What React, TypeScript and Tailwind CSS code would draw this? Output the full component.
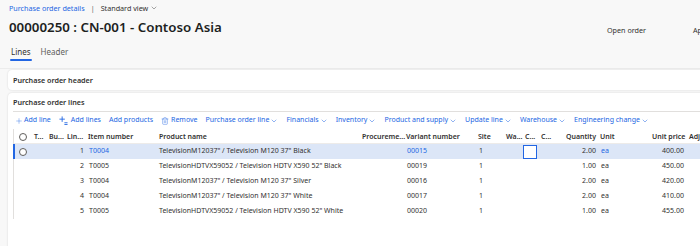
import { ChevronDown, Plus, Trash2 } from "lucide-react";

const blue = "text-[#2266e3]";

const toolbar = [
  { label: "Purchase order line" },
  { label: "Financials" },
  { label: "Inventory" },
  { label: "Product and supply" },
  { label: "Update line" },
  { label: "Warehouse" },
  { label: "Engineering change" },
];

const rows = [
  { line: 1, item: "T0004", name: 'TelevisionM12037" / Television M120 37" Black', variant: "00015", qty: "2.00", price: "400.00" },
  { line: 2, item: "T0005", name: 'TelevisionHDTVX59052 / Television HDTV X590 52" Black', variant: "00019", qty: "1.00", price: "450.00" },
  { line: 3, item: "T0004", name: 'TelevisionM12037" / Television M120 37" Silver', variant: "00016", qty: "2.00", price: "420.00" },
  { line: 4, item: "T0004", name: 'TelevisionM12037" / Television M120 37" White', variant: "00017", qty: "2.00", price: "410.00" },
  { line: 5, item: "T0005", name: 'TelevisionHDTVX59052 / Television HDTV X590 52" White', variant: "00020", qty: "1.00", price: "455.00" },
];

const cols =
  "grid grid-cols-[18px_15px_18px_21px_71px_203px_44px_72px_28px_19px_16px_17px_42px_54px_35px_60px]";

function AddLinesIcon() {
  return (
    <svg width="9" height="9" viewBox="0 0 10 10" fill="none" stroke="currentColor" strokeWidth="1">
      <path d="M3.5 0.5v6M0.5 3.5h6M6 7.5h3.5M6 9.5h3.5" />
    </svg>
  );
}

function Circle() {
  return <div className="w-[8px] h-[8px] rounded-full border border-[#605e5c] bg-white" />;
}

export default function App() {
  return (
    <div
      className="w-[700px] h-[246px] overflow-hidden bg-[#f8f8f8] text-[#323130]"
      style={{ fontFamily: '"Noto Sans", "Open Sans", sans-serif' }}
    >
      <div className="w-[780px]">
        {/* Top section */}
        <div className="border-b border-[#ececec] pb-[7px]">
          <div className="h-[17px] px-[9px] flex items-center gap-[6px] text-[7.2px]">
            <span className={blue}>Purchase order details</span>
            <span className="text-[#605e5c]">|</span>
            <span className="flex items-center gap-[2px]">
              Standard view
              <ChevronDown className="w-[8px] h-[8px]" strokeWidth={1.3} />
            </span>
          </div>
          <div className="mt-[2px] h-[18px] pl-[9px] flex items-center">
            <h1 className="w-[598px] text-[13.3px] font-semibold leading-none text-[#201f1e]">
              00000250 : CN-001 - Contoso Asia
            </h1>
            <div className="flex items-center pt-[5px] text-[7.2px] whitespace-nowrap">
              <span className="w-[86px]">Open order</span>
              <span>Approved</span>
            </div>
          </div>
          <div className="mt-[9px] px-[9px] flex gap-[8px] text-[8px]">
            <div className="flex flex-col items-center">
              <span className="h-[12px] leading-[12px] px-[2px]">Lines</span>
              <div className="mt-[1px] h-[2px] w-[22px] rounded-full bg-[#2266e3]" />
            </div>
            <span className="h-[12px] leading-[12px] text-[#605e5c]">Header</span>
          </div>
        </div>

        {/* Purchase order header card */}
        <div className="ml-[8px] mt-[1px] h-[20px] rounded-[4px] bg-white shadow-[0_0_2px_rgba(0,0,0,0.15)] px-[5px] flex items-center text-[7.2px] font-semibold">
          Purchase order header
        </div>

        {/* Purchase order lines card */}
        <div className="ml-[8px] mt-[3px] h-[200px] rounded-[4px] bg-white shadow-[0_0_2px_rgba(0,0,0,0.15)] px-[5px]">
          <div className="h-[19px] flex items-center text-[7.2px] font-semibold border-b border-[#e1dfdd]">
            Purchase order lines
          </div>

          {/* Toolbar */}
          <div className={`h-[17px] pl-[2px] flex items-center gap-[8px] text-[7px] ${blue}`}>
            <span className="flex items-center gap-[1px]">
              <Plus className="w-[8px] h-[8px]" strokeWidth={1.2} />
              Add line
            </span>
            <span className="flex items-center gap-[3px]">
              <AddLinesIcon />
              Add lines
            </span>
            <span>Add products</span>
            <span className="flex items-center gap-[2px]">
              <Trash2 className="w-[8px] h-[8px]" strokeWidth={1.3} />
              Remove
            </span>
            {toolbar.map((t) => (
              <span key={t.label} className="flex items-center gap-[1px]">
                {t.label}
                <ChevronDown className="w-[8px] h-[8px]" strokeWidth={1.5} />
              </span>
            ))}
          </div>

          {/* Grid */}
          <div className="border-l border-[#e1dfdd] text-[7px]">
            <div className={`${cols} h-[15px] pt-[2px] items-center font-semibold border-b border-[#edebe9] whitespace-nowrap`}>
              <div className="flex justify-center"><Circle /></div>
              <div className="pl-[2px]">T...</div>
              <div className="pl-[2px]">Bu...</div>
              <div className="pl-[2px]">Lin...</div>
              <div className="pl-[2px]">Item number</div>
              <div className="pl-[2px]">Product name</div>
              <div className="pl-[2px]">Procureme...</div>
              <div className="pl-[2px]">Variant number</div>
              <div className="pl-[2px]">Site</div>
              <div className="pl-[2px]">Wa...</div>
              <div className="pl-[2px]">C...</div>
              <div className="pl-[2px]">C...</div>
              <div className="text-right pr-[2px]">Quantity</div>
              <div className="pl-[2px]">Unit</div>
              <div className="text-right pr-[3px]">Unit price</div>
              <div className="pl-[2px]">Adjustment</div>
            </div>

            {rows.map((r, i) => {
              const sel = i === 0;
              return (
                <div
                  key={r.line}
                  className={`${cols} h-[15px] items-center whitespace-nowrap relative ${sel ? "bg-[#dce6f7]" : ""}`}
                >
                  {sel && <div className="absolute left-[-1px] top-0 h-full w-[2px] bg-[#2266e3]" />}
                  <div className="flex justify-center">{sel && <Circle />}</div>
                  <div />
                  <div />
                  <div className="text-right pr-[2px]">{r.line}</div>
                  <div className={`pl-[3px] ${sel ? blue : ""}`}>{r.item}</div>
                  <div className="pl-[2px]">{r.name}</div>
                  <div />
                  <div className={`pl-[3px] ${sel ? blue : ""}`}>{r.variant}</div>
                  <div className="pl-[3px]">1</div>
                  <div />
                  <div className="flex">
                    {sel && <div className="w-[14px] h-[14px] bg-white border border-[#2266e3]" />}
                  </div>
                  <div />
                  <div className="text-right pr-[2px]">{r.qty}</div>
                  <div className={`pl-[3px] ${sel ? blue : ""}`}>ea</div>
                  <div className="text-right pr-[3px]">{r.price}</div>
                  <div />
                </div>
              );
            })}
          </div>
        </div>
      </div>
    </div>
  );
}
